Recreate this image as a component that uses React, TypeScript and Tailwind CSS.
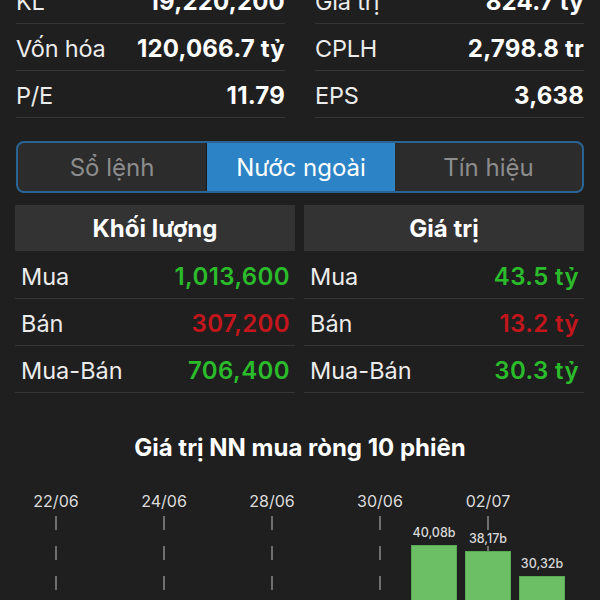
import React from "react";

const stats: [string, string, string, string][] = [
  ["KL", "19,220,200", "Giá trị", "824.7 tỷ"],
  ["Vốn hóa", "120,066.7 tỷ", "CPLH", "2,798.8 tr"],
  ["P/E", "11.79", "EPS", "3,638"],
];

const volRows = [
  { l: "Mua", v: "1,013,600", c: "text-[#2bbb2b]" },
  { l: "Bán", v: "307,200", c: "text-[#c3161c]" },
  { l: "Mua-Bán", v: "706,400", c: "text-[#2bbb2b]" },
];
const valRows = [
  { l: "Mua", v: "43.5 tỷ", c: "text-[#2bbb2b]" },
  { l: "Bán", v: "13.2 tỷ", c: "text-[#c3161c]" },
  { l: "Mua-Bán", v: "30.3 tỷ", c: "text-[#2bbb2b]" },
];

const cols: { date?: string; value?: number; label?: string }[] = [
  { date: "22/06" },
  {},
  { date: "24/06" },
  {},
  { date: "28/06" },
  {},
  { date: "30/06" },
  { value: 40.08, label: "40,08b" },
  { date: "02/07", value: 38.17, label: "38,17b" },
  { value: 30.32, label: "30,32b" },
];

export default function App() {
  return (
    <div
      className="w-[600px] h-[600px] overflow-hidden bg-[#1f1f1f] text-white"
      style={{ fontFamily: "Inter, 'Noto Sans', sans-serif" }}
    >
      {/* stats */}
      <div className="-mt-[23px] grid grid-cols-2 gap-x-[30px] pl-[16px] pr-[16px]">
        {[0, 1].map((side) => (
          <div key={side} className="flex flex-col">
            {stats.map((r, i) => (
              <div
                key={i}
                className="h-[47px] pt-[3px] flex items-center justify-between border-b border-[#363636]"
              >
                <span className="text-[23.5px] text-[#ececec] tracking-[-0.2px]">{r[side * 2]}</span>
                <span className="text-[24px] font-bold text-white tracking-[0.2px]">{r[side * 2 + 1]}</span>
              </div>
            ))}
          </div>
        ))}
      </div>

      {/* tabs */}
      <div className="mt-[23px] mx-[16px] h-[52px] flex rounded-[8px] border-2 border-[#2a6494] overflow-hidden bg-[#2c2c2c]">
        <div className="w-[189px] pt-[2px] flex items-center justify-center text-[24px] text-[#8c8c8c] border-r border-[#1a1a1a]">
          Sổ lệnh
        </div>
        <div className="w-[188px] pt-[2px] flex items-center justify-center text-[24px] text-white bg-[#2c83c6]">
          Nước ngoài
        </div>
        <div className="flex-1 pt-[2px] flex items-center justify-center text-[24px] text-[#8c8c8c]">
          Tín hiệu
        </div>
      </div>

      {/* foreign table */}
      <div className="mt-[12px] pl-[15px] pr-[16px] grid grid-cols-2 gap-x-[9px]">
        {[
          { h: "Khối lượng", rows: volRows },
          { h: "Giá trị", rows: valRows },
        ].map((t) => (
          <div key={t.h} className="flex flex-col">
            <div className="h-[46px] pt-[2px] bg-[#333333] flex items-center justify-center text-[24px] font-bold text-white">
              {t.h}
            </div>
            {t.rows.map((r, i) => (
              <div
                key={i}
                className={`${i === 0 ? "h-[48px]" : "h-[47px]"} pt-[4px] flex items-center justify-between pl-[6px] pr-[5px] border-b border-[#363636]`}
              >
                <span className="text-[23.5px] text-[#ececec]">{r.l}</span>
                <span className={`text-[24px] font-semibold tracking-[0.4px] ${r.c}`}>{r.v}</span>
              </div>
            ))}
          </div>
        ))}
      </div>

      {/* chart title */}
      <div className="mt-[41px] text-center text-[24px] font-bold text-white leading-[28px]">
        Giá trị NN mua ròng 10 phiên
      </div>

      {/* chart */}
      <div className="mt-[29px] pl-[29px] flex">
        {cols.map((c, i) => (
          <div key={i} className="relative w-[54px] h-[180px] flex flex-col items-center">
            <div className="h-[20px] leading-[20px] text-[16px] text-[#dcdcdc] whitespace-nowrap">
              {c.date ?? ""}
            </div>
            {c.date && (
              <div className="absolute left-1/2 -translate-x-1/2 top-[25px] w-[2px] h-[155px] bg-[repeating-linear-gradient(to_bottom,#6e6e6e_0px,#6e6e6e_14px,transparent_14px,transparent_30px)]" />
            )}
            <div className="relative flex-1 w-full flex flex-col justify-end items-center">
              {c.value !== undefined && (
                <>
                  <div className="text-[12.5px] leading-[16px] mb-[4px] text-[#d8d8d8] font-medium">{c.label}</div>
                  <div
                    className="w-[46px] bg-[#6cbf65] border border-[#5aa954]"
                    style={{ height: `${c.value * 3.15}px` }}
                  />
                </>
              )}
            </div>
          </div>
        ))}
      </div>
    </div>
  );
}
